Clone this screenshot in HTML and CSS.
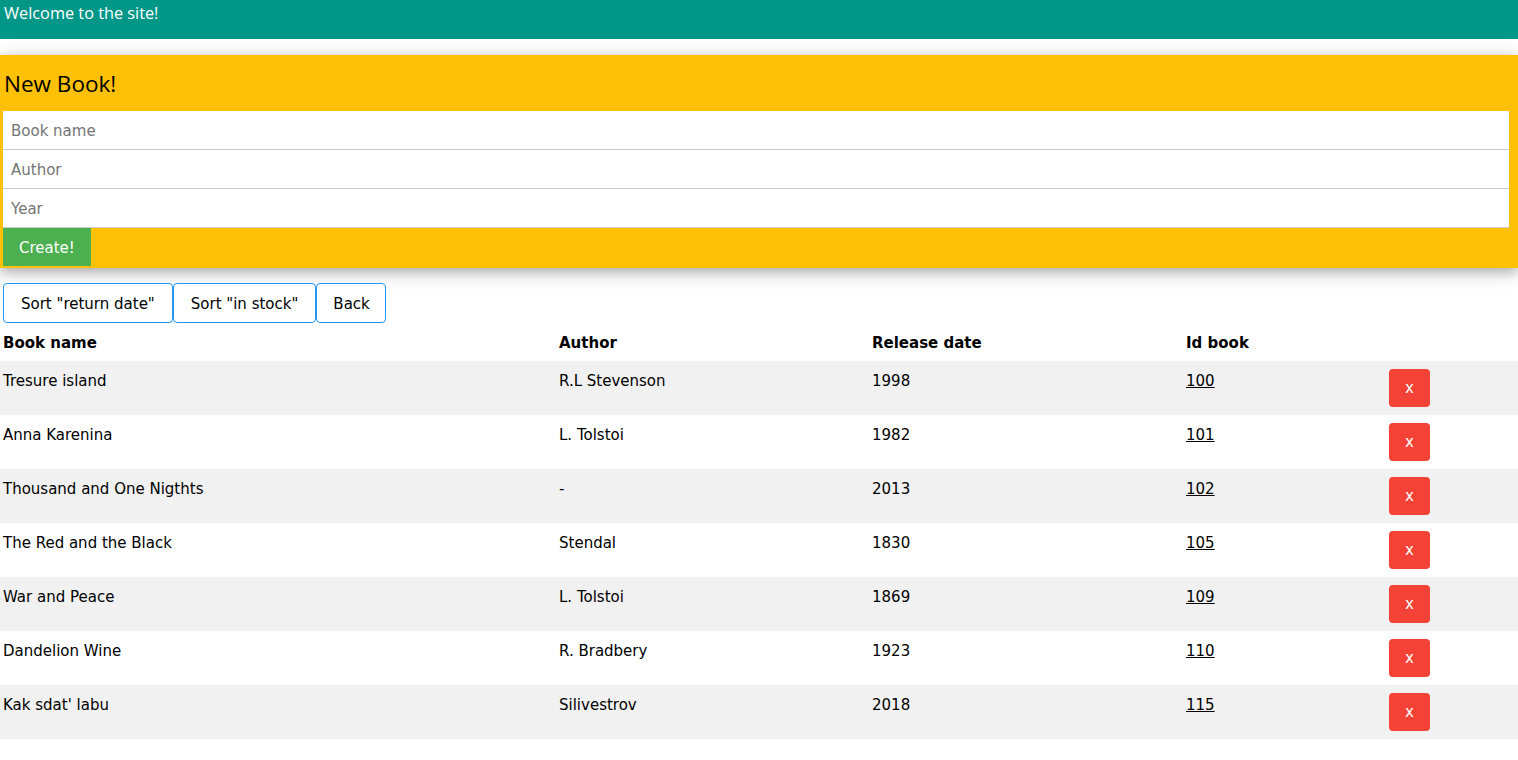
FILE: index.html
```html
<!DOCTYPE html>
<html>
<head>
<meta charset="utf-8">
<link rel="stylesheet" href="styles.css">
</head>
<body>
<header class="topbar">Welcome to the site!</header>
<section class="card">
  <h3 class="card-title">New Book!</h3>
  <form class="book-form">
    <input class="field" type="text" placeholder="Book name">
    <input class="field" type="text" placeholder="Author">
    <input class="field" type="text" placeholder="Year">
    <div><button type="button" class="btn-create">Create!</button></div>
  </form>
</section>
<div class="toolbar">
  <button type="button" class="btn-outline">Sort "return date"</button>
  <button type="button" class="btn-outline">Sort "in stock"</button>
  <button type="button" class="btn-outline btn-back">Back</button>
</div>
<table class="books">
  <colgroup>
    <col class="c1"><col class="c2"><col class="c3"><col class="c4"><col class="c5">
  </colgroup>
  <thead>
    <tr><th>Book name</th><th>Author</th><th>Release date</th><th>Id book</th><th></th></tr>
  </thead>
  <tbody>
    <tr><td>Tresure island</td><td>R.L Stevenson</td><td>1998</td><td><a href="#">100</a></td><td><button type="button" class="btn-del">x</button></td></tr>
    <tr><td>Anna Karenina</td><td>L. Tolstoi</td><td>1982</td><td><a href="#">101</a></td><td><button type="button" class="btn-del">x</button></td></tr>
    <tr><td>Thousand and One Nigthts</td><td>-</td><td>2013</td><td><a href="#">102</a></td><td><button type="button" class="btn-del">x</button></td></tr>
    <tr><td>The Red and the Black</td><td>Stendal</td><td>1830</td><td><a href="#">105</a></td><td><button type="button" class="btn-del">x</button></td></tr>
    <tr><td>War and Peace</td><td>L. Tolstoi</td><td>1869</td><td><a href="#">109</a></td><td><button type="button" class="btn-del">x</button></td></tr>
    <tr><td>Dandelion Wine</td><td>R. Bradbery</td><td>1923</td><td><a href="#">110</a></td><td><button type="button" class="btn-del">x</button></td></tr>
    <tr><td>Kak sdat' labu</td><td>Silivestrov</td><td>2018</td><td><a href="#">115</a></td><td><button type="button" class="btn-del">x</button></td></tr>
  </tbody>
</table>
</body>
</html>
```
FILE: styles.css
```css
html, body {
  margin: 0;
  padding: 0;
}
body {
  font-family: "DejaVu Sans", Verdana, sans-serif;
  font-size: 15px;
  line-height: 1.5;
  color: #000;
  background: #fff;
}
.topbar {
  background: #009688;
  color: #fff;
  height: 39px;
  box-sizing: border-box;
  padding: 1px 4px 0;
  font-family: "Open Sans", sans-serif;
  font-size: 16.3px;
  line-height: 24px;
}
.card {
  margin-top: 16px;
  background: #ffc107;
  padding: 0 9px 2px 3px;
  box-shadow: 0 4px 10px 0 rgba(0,0,0,0.2), 0 4px 20px 0 rgba(0,0,0,0.19);
}
.card-title {
  margin: 0;
  padding: 14px 0 13px 1px;
  font-family: "Open Sans", sans-serif;
  font-weight: 400;
  font-size: 22.5px;
  line-height: 29px;
}
.book-form {
  margin: 0;
}
.field {
  display: block;
  width: 100%;
  box-sizing: border-box;
  border: none;
  border-bottom: 1px solid #ccc;
  padding: 9px 8px 7px;
  font-family: inherit;
  font-size: 15px;
  line-height: 22px;
  height: 39px;
  background: #fff;
  outline: none;
}
.field::placeholder {
  color: #757575;
}
.btn-create {
  background: #4caf50;
  color: #fff;
  border: none;
  padding: 9px 16px 7px;
  font-family: inherit;
  font-size: 15px;
  line-height: 22px;
  height: 38px;
  cursor: pointer;
}
.toolbar {
  display: flex;
  gap: 0;
  padding: 15px 0 0 3px;
}
.btn-outline {
  background: #fff;
  color: #000;
  border: 1px solid #2196f3;
  border-radius: 4px;
  padding: 9px 17px 7px;
  font-family: inherit;
  font-size: 15px;
  line-height: 22px;
  height: 40px;
}
.btn-back {
  padding-left: 16px;
  padding-right: 15px;
}
.books {
  width: 100%;
  border-collapse: collapse;
  table-layout: fixed;
  margin-top: 0;
}
.c1 { width: 556px; }
.c2 { width: 313px; }
.c3 { width: 314px; }
.c4 { width: 203px; }
.c5 { width: 132px; }
.books th, .books td {
  text-align: left;
  vertical-align: top;
  padding: 9px 3px 7px;
  line-height: 22px;
}
.books th {
  font-weight: 700;
}
.books tbody tr:nth-child(odd) {
  background: #f1f1f1;
}
.books td {
  height: 38px;
}
.books td:last-child {
  padding-top: 8px;
  padding-bottom: 8px;
}
.books a {
  color: #000;
  text-decoration: underline;
}
.btn-del {
  display: block;
  background: #f44336;
  color: #fff;
  border: none;
  border-radius: 4px;
  width: 41px;
  height: 38px;
  padding: 0;
  font-family: inherit;
  font-size: 15px;
  line-height: 38px;
  text-align: center;
}
```
